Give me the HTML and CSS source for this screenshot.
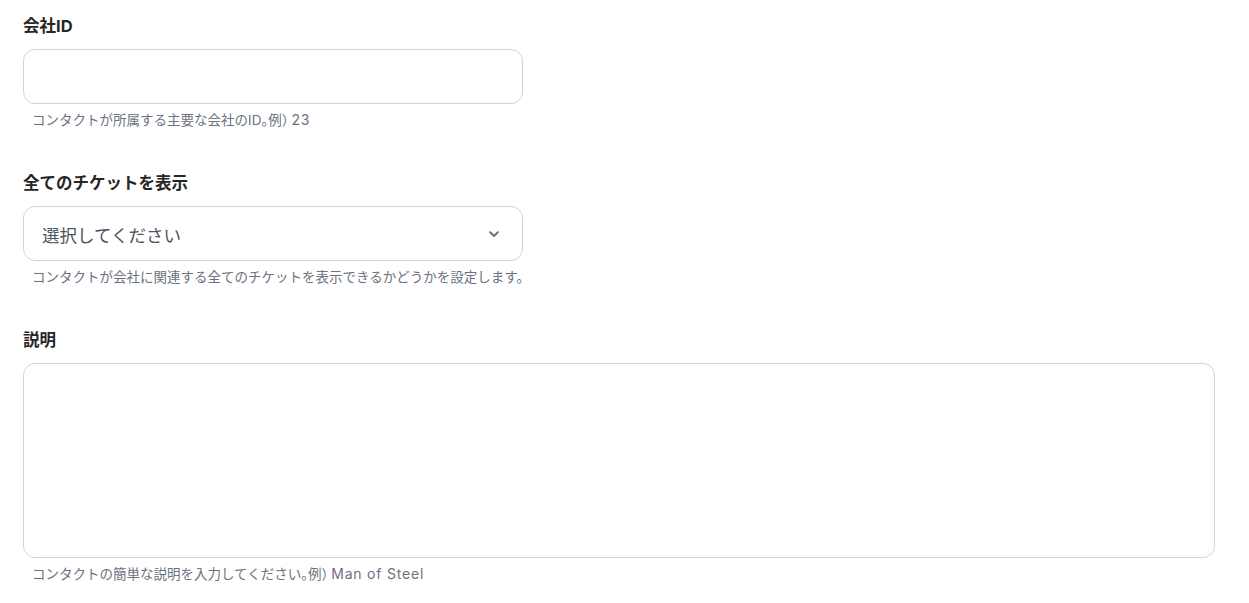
FILE: index.html
```html
<!DOCTYPE html>
<html lang="ja">
<head>
<meta charset="utf-8">
<link rel="stylesheet" href="styles.css">
</head>
<body>
<form class="form">
  <div class="field">
    <label class="label">会社ID</label>
    <div class="input short"></div>
    <p class="help">コンタクトが所属する主要な会社のID<span class="punct">。</span>例<span class="punct paren">）</span><span class="latin">23</span></p>
  </div>
  <div class="field">
    <label class="label">全てのチケットを表示</label>
    <div class="input short select">
      <span class="placeholder">選択してください</span>
      <svg class="chev" width="10" height="7" viewBox="0 0 10 7"><path d="M1.2 1.2 L5 5 L8.8 1.2" fill="none" stroke="#6b7280" stroke-width="2" stroke-linecap="round" stroke-linejoin="round"/></svg>
    </div>
    <p class="help">コンタクトが会社に関連する全てのチケットを表示できるかどうかを設定します。</p>
  </div>
  <div class="field">
    <label class="label">説明</label>
    <div class="input area"></div>
    <p class="help">コンタクトの簡単な説明を入力してください<span class="punct">。</span>例<span class="punct paren">）</span><span class="latin">Man of Steel</span></p>
  </div>
</form>
</body>
</html>
```

FILE: styles.css
```css
html, body {
  margin: 0;
  padding: 0;
  background: #ffffff;
}
body {
  font-family: Inter, "Noto Sans CJK JP", sans-serif;
  color: #1f2937;
}
.form {
  display: flex;
  flex-direction: column;
  gap: 42px;
  padding: 14px 34px 0 23px;
}
.field {
  display: flex;
  flex-direction: column;
}
.label {
  font-size: 16.5px;
  line-height: 24px;
  font-weight: 700;
  color: #262626;
  margin-bottom: 11px;
}
.input {
  box-sizing: border-box;
  border: 1px solid #d1d5db;
  border-radius: 12px;
  background: #fff;
}
.short {
  width: 500px;
  height: 55px;
}
.select {
  display: flex;
  align-items: center;
  justify-content: space-between;
  padding: 2px 23px 0 18px;
}
.placeholder {
  font-size: 17.5px;
  color: #4b5563;
}
.chev {
  display: block;
}
.area {
  width: 1192px;
  height: 195px;
}
.help {
  margin: 7px 0 0 9px;
  font-size: 13.5px;
  line-height: 18px;
  color: #6b7280;
}
.punct {
  font-feature-settings: "halt";
}
.paren {
  margin-right: 3px;
}
.latin {
  font-size: 14px;
  letter-spacing: 0.8px;
}
```
